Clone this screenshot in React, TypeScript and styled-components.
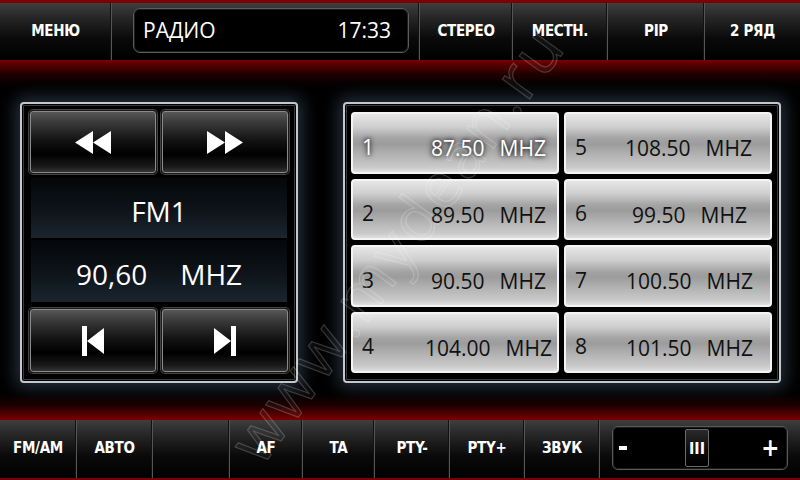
import React from "react";
import styled, { createGlobalStyle } from "styled-components";

const GlobalStyle = createGlobalStyle`
  html, body {
    margin: 0;
    padding: 0;
    background: #000;
  }
  body {
    width: 800px;
    height: 480px;
    overflow: hidden;
    font-family: "Open Sans", "Noto Sans", sans-serif;
  }
`;

const Screen = styled.div`
  position: relative;
  width: 800px;
  height: 480px;
  display: flex;
  flex-direction: column;
  background: #000;
  overflow: hidden;
`;

const TopBar = styled.div`
  height: 60px;
  box-sizing: border-box;
  border-top: 3px solid #7a0000;
  display: flex;
`;

const BottomBar = styled.div`
  height: 60px;
  box-sizing: border-box;
  border-bottom: 2px solid #7a0000;
  display: flex;
`;

const BarCell = styled.div<{ $w: number }>`
  width: ${(p) => p.$w}px;
  flex: none;
  box-sizing: border-box;
  display: flex;
  align-items: center;
  justify-content: center;
  padding-bottom: 2px;
  background: linear-gradient(#3e3e3e 0%, #242424 28%, #0a0a0a 62%, #000 100%);
  border-right: 1px solid #555;
  box-shadow: inset -1px 0 0 #111;
  color: #fff;
  font-family: "DejaVu Sans Condensed", "DejaVu Sans", sans-serif;
  font-stretch: condensed;
  font-weight: bold;
  font-size: 15px;
  letter-spacing: -0.3px;
  &:last-child {
    border-right: none;
    box-shadow: none;
  }
`;

const DisplayCell = styled(BarCell)`
  align-items: stretch;
  padding: 5px 10px 7px 21px;
`;

const Display = styled.div`
  flex: 1;
  display: flex;
  align-items: center;
  justify-content: space-between;
  padding: 0 17px 2px 9px;
  border: 1px solid #5c5c5c;
  border-radius: 7px;
  background: #000;
  box-shadow: inset 0 0 0 1px #1c1c1c;
  font-family: "Open Sans", "Noto Sans", sans-serif;
  font-stretch: normal;
  font-weight: normal;
  font-size: 21px;
  letter-spacing: 0;
  color: #fff;
`;

const Main = styled.div`
  flex: 1;
  display: flex;
  align-items: flex-start;
  padding: 42px 0 0 20px;
  gap: 45px;
  background: linear-gradient(
    to bottom,
    #7c0000 0px,
    #520000 5px,
    #1e0000 15px,
    #050000 24px,
    #000 30px,
    #000 calc(100% - 26px),
    #200000 calc(100% - 14px),
    #7c0000 100%
  );
`;

const Panel = styled.div<{ $w: number }>`
  width: ${(p) => p.$w}px;
  height: 281px;
  box-sizing: border-box;
  border: 2px solid #c4c8cc;
  border-radius: 4px;
  background: #000;
  box-shadow: 0 0 16px 5px rgba(110, 140, 180, 0.33),
    inset 0 0 0 1px #000, inset 0 0 0 2px #3a3a3a;
`;

const TunerPanel = styled(Panel)`
  display: flex;
  flex-direction: column;
  padding: 6px 7px 8px 7px;
`;

const ButtonRow = styled.div<{ $h: number; $top?: number }>`
  display: flex;
  gap: 4px;
  height: ${(p) => p.$h}px;
  margin-top: ${(p) => p.$top ?? 0}px;
`;

const DarkButton = styled.div`
  flex: 1;
  display: flex;
  align-items: center;
  justify-content: center;
  box-sizing: border-box;
  border: 1px solid #1a1a1a;
  border-radius: 4px;
  background: linear-gradient(
    #5a5a5a 0%,
    #3a3a3a 18%,
    #121212 48%,
    #000 70%,
    #1a1a1a 90%,
    #3a3a3a 100%
  );
  box-shadow: inset 0 0 0 1px #8a8a8a, 0 0 0 1px #444;
`;

const Band = styled.div<{ $h: number; $top: number }>`
  height: ${(p) => p.$h}px;
  margin: ${(p) => p.$top}px 2px 0;
  box-sizing: border-box;
  padding-top: 6px;
  display: flex;
  align-items: center;
  justify-content: center;
  gap: 33px;
  color: #fff;
  font-size: 28px;
  background: linear-gradient(#050709 0%, #0e141a 55%, #1a2530 100%);
`;

const PresetPanel = styled(Panel)`
  display: grid;
  grid-template-columns: 208px 208px;
  grid-template-rows: repeat(4, 1fr);
  grid-auto-flow: column;
  gap: 5px;
  padding: 8px 7px 8px 6px;
`;

const Preset = styled.div<{ $lead: number; $active?: boolean }>`
  position: relative;
  display: flex;
  align-items: center;
  box-sizing: border-box;
  padding: 11px 0 0 ${(p) => p.$lead}px;
  border: 2px solid #f4f4f4;
  border-radius: 4px;
  background: linear-gradient(
    #e6e6e6 0%,
    #cfcfcf 22%,
    #a4a4a4 42%,
    #9c9c9c 52%,
    #b4b4b4 72%,
    #cacaca 92%,
    #e0e0e0 100%
  );
  font-size: 21px;
  color: ${(p) => (p.$active ? "#fff" : "#111")};
  text-shadow: ${(p) =>
    p.$active ? "0 0 4px #222, 0 0 6px #333" : "none"};
`;

const PresetNum = styled.span`
  position: absolute;
  left: 9px;
  top: 50%;
  transform: translateY(-36%);
`;

const PresetFreq = styled.span`
  display: flex;
  gap: 15px;
`;

const SliderCell = styled(BarCell)`
  padding: 6px 12px 8px 12px;
  align-items: stretch;
`;

const SliderBox = styled.div`
  flex: 1;
  display: flex;
  align-items: center;
  justify-content: space-between;
  padding: 0 8px 0 6px;
  border: 1px solid #5a5a5a;
  border-radius: 6px;
  background: #000;
  box-shadow: inset 0 0 0 1px #1a1a1a;
`;

const Minus = styled.div`
  width: 8px;
  height: 4px;
  background: #fff;
`;

const Plus = styled.div`
  font-family: "DejaVu Sans", sans-serif;
  font-size: 24px;
  font-weight: bold;
  line-height: 1;
`;

const Thumb = styled.div`
  width: 24px;
  height: 38px;
  margin-left: 58px;
  margin-right: auto;
  box-sizing: border-box;
  display: flex;
  align-items: center;
  justify-content: center;
  border: 1px solid #6a6a6a;
  border-radius: 2px;
  background: linear-gradient(#2a2a2a, #0a0a0a 60%, #000);
  font-size: 16px;
  letter-spacing: 0;
`;

/* faint diagonal watermark printed over the whole screen */
const Watermark = styled.div`
  position: absolute;
  left: 135px;
  top: 200px;
  transform: rotate(-54deg);
  transform-origin: center;
  pointer-events: none;
  white-space: nowrap;
  font-family: "Open Sans", "Noto Sans", sans-serif;
  font-size: 63px;
  letter-spacing: 3px;
  color: rgba(255, 255, 255, 0.04);
  -webkit-text-stroke: 1.1px rgba(255, 255, 255, 0.2);
`;

const Icon = styled.svg`
  display: block;
  fill: #fff;
`;

const Rewind = () => (
  <Icon width="37" height="23" viewBox="0 0 37 23">
    <polygon points="0,11.5 18,0 18,23" />
    <polygon points="18,11.5 36,0 36,23" />
  </Icon>
);

const Forward = () => (
  <Icon width="37" height="23" viewBox="0 0 37 23">
    <polygon points="0,0 18,11.5 0,23" />
    <polygon points="18,0 36,11.5 18,23" />
  </Icon>
);

const Prev = () => (
  <Icon width="22" height="30" viewBox="0 0 22 30">
    <rect x="0" y="0" width="5" height="30" />
    <polygon points="5,15 22,2 22,28" />
  </Icon>
);

const Next = () => (
  <Icon width="22" height="30" viewBox="0 0 22 30">
    <polygon points="0,2 17,15 0,28" />
    <rect x="17" y="0" width="5" height="30" />
  </Icon>
);

const presets = [
  { n: 1, f: "87.50", lead: 78, active: true },
  { n: 2, f: "89.50", lead: 78 },
  { n: 3, f: "90.50", lead: 78 },
  { n: 4, f: "104.00", lead: 72 },
  { n: 5, f: "108.50", lead: 59 },
  { n: 6, f: "99.50", lead: 66 },
  { n: 7, f: "100.50", lead: 60 },
  { n: 8, f: "101.50", lead: 60 },
];

const topButtons = [
  { label: "СТЕРЕО", w: 93 },
  { label: "МЕСТН.", w: 95 },
  { label: "PIP", w: 97 },
  { label: "2 РЯД", w: 95 },
];

const bottomButtons = [
  { label: "FM/AM", w: 77 },
  { label: "АВТО", w: 76 },
  { label: "", w: 77 },
  { label: "AF", w: 73 },
  { label: "TA", w: 72 },
  { label: "PTY-", w: 75 },
  { label: "PTY+", w: 75 },
  { label: "ЗВУК", w: 75 },
];

export default function App() {
  return (
    <>
      <GlobalStyle />
      <Screen>
        <TopBar>
          <BarCell $w={112}>МЕНЮ</BarCell>
          <DisplayCell $w={308}>
            <Display>
              <span>РАДИО</span>
              <span>17:33</span>
            </Display>
          </DisplayCell>
          {topButtons.map((b) => (
            <BarCell key={b.label} $w={b.w}>
              {b.label}
            </BarCell>
          ))}
        </TopBar>

        <Main>
          <TunerPanel $w={278}>
            <ButtonRow $h={64}>
              <DarkButton>
                <Rewind />
              </DarkButton>
              <DarkButton>
                <Forward />
              </DarkButton>
            </ButtonRow>
            <Band $h={60} $top={4}>
              FM1
            </Band>
            <Band $h={62} $top={2}>
              <span>90,60</span>
              <span>MHZ</span>
            </Band>
            <ButtonRow $h={65} $top={6}>
              <DarkButton>
                <Prev />
              </DarkButton>
              <DarkButton>
                <Next />
              </DarkButton>
            </ButtonRow>
          </TunerPanel>

          <PresetPanel $w={438}>
            {presets.map((p) => (
              <Preset key={p.n} $lead={p.lead} $active={p.active}>
                <PresetNum>{p.n}</PresetNum>
                <PresetFreq>
                  <span>{p.f}</span>
                  <span>MHZ</span>
                </PresetFreq>
              </Preset>
            ))}
          </PresetPanel>
        </Main>

        <BottomBar>
          {bottomButtons.map((b, i) => (
            <BarCell key={i} $w={b.w}>
              {b.label}
            </BarCell>
          ))}
          <SliderCell $w={200}>
            <SliderBox>
              <Minus />
              <Thumb>III</Thumb>
              <Plus>+</Plus>
            </SliderBox>
          </SliderCell>
        </BottomBar>

        <Watermark>www.mydean.ru</Watermark>
      </Screen>
    </>
  );
}
